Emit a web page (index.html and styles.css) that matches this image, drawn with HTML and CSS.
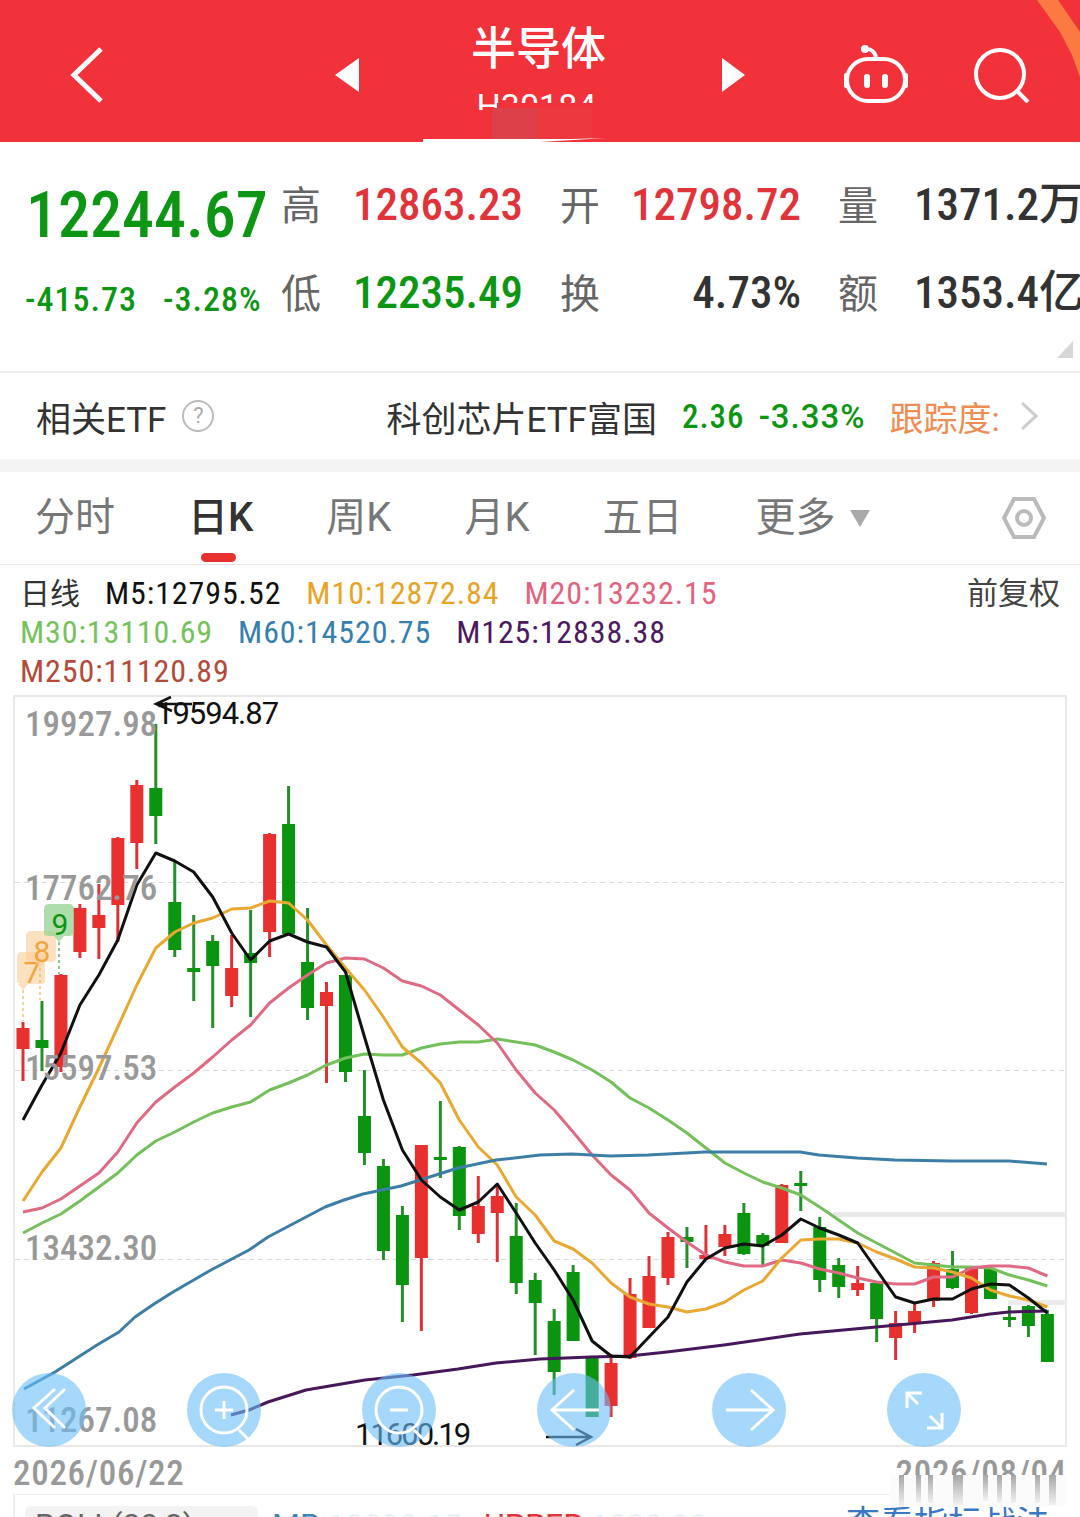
FILE: index.html
```html
<!DOCTYPE html>
<html>
<head>
    <meta charset="utf-8">
    <title>半导体</title>
    <link rel="stylesheet" href="styles.css">
</head>
<body>
    <div class="page">
        <div class="header">
            <svg class="back-icon" viewBox="0 0 34 58">
                <polyline points="31,3 4,29 31,55"></polyline>
            </svg>
            <svg class="arrow-icon prev" viewBox="0 0 24 34"><polygon points="24,0 24,34 0,17"></polygon></svg>
            <div class="title-box">
                <div class="title">半导体</div>
                <div class="subtitle">H30184</div>
            </div>
            <svg class="arrow-icon" viewBox="0 0 24 34"><polygon points="0,0 0,34 23,17"></polygon></svg>
            <svg class="robot-icon" viewBox="0 0 64 60">
                <rect x="3" y="14" width="58" height="42" rx="21"></rect>
                <path d="M32 14c0-5-2-8-7-10"></path>
                <circle class="solid" cx="21" cy="4" r="4"></circle>
                <rect class="solid" x="20" y="29" width="6" height="14" rx="3"></rect>
                <rect class="solid" x="38" y="29" width="6" height="14" rx="3"></rect>
                <rect class="solid" x="0" y="28" width="4" height="15" rx="2"></rect>
                <rect class="solid" x="60" y="28" width="4" height="15" rx="2"></rect>
            </svg>
            <svg class="search-icon" viewBox="0 0 56 56">
                <circle cx="26" cy="27" r="24"></circle>
                <line x1="44" y1="45" x2="54" y2="55"></line>
            </svg>
            <svg class="header-deco" viewBox="0 0 1080 142">
                <rect x="497" y="103" width="110" height="7" fill="#f1323a"></rect>
                <rect x="492" y="108" width="46" height="32" fill="#dc414a"></rect>
                <rect x="538" y="108" width="54" height="32" fill="#ee3840"></rect>
                <polygon points="423,139 572,139 606,138 540,142 423,142" fill="#fff"></polygon>
                <polygon points="1037,0 1058,0 1080,32 1080,77 1072,55 1060,32" fill="#fb7a42"></polygon>
            </svg>
        </div>

        <div class="stats">
            <div class="price green">12244.67</div>
            <div class="label">高</div>
            <div class="value red">12863.23</div>
            <div class="label">开</div>
            <div class="value red">12798.72</div>
            <div class="label">量</div>
            <div class="value dark wide">1371.2万</div>

            <div class="change green"><span>-415.73</span><span>-3.28%</span></div>
            <div class="label">低</div>
            <div class="value green">12235.49</div>
            <div class="label">换</div>
            <div class="value dark">4.73%</div>
            <div class="label">额</div>
            <div class="value dark wide">1353.4亿</div>
            <div class="corner"></div>
        </div>

        <div class="etf">
            <span class="etf-title">相关ETF</span>
            <span class="help">?</span>
            <span class="etf-name">科创芯片ETF富国</span>
            <span class="etf-num green">2.36</span>
            <span class="etf-num etf-pct green">-3.33%</span>
            <span class="etf-track">跟踪度:</span>
            <svg class="etf-more" viewBox="0 0 18 30"><polyline points="2,2 16,15 2,28"></polyline></svg>
        </div>

        <div class="band"></div>

        <div class="tabs">
            <div class="tab">分时</div>
            <div class="tab active">日K</div>
            <div class="tab">周K</div>
            <div class="tab">月K</div>
            <div class="tab">五日</div>
            <div class="tab more">更多</div>
            <div class="more-arrow"></div>
            <svg class="gear" viewBox="0 0 44 44">
                <polygon points="12,3 32,3 42,22 32,41 12,41 2,22"></polygon>
                <circle cx="22" cy="22" r="7"></circle>
            </svg>
        </div>

        <div class="legend">
            <div class="legend-row">
                <span class="legend-name">日线</span>
                <span class="m5">M5:12795.52</span>
                <span class="m10">M10:12872.84</span>
                <span class="m20">M20:13232.15</span>
                <span class="legend-fq">前复权</span>
            </div>
            <div class="legend-row">
                <span class="m30">M30:13110.69</span>
                <span class="m60">M60:14520.75</span>
                <span class="m125">M125:12838.38</span>
            </div>
            <div class="legend-row">
                <span class="m250">M250:11120.89</span>
            </div>
        </div>

        <div class="chart" id="chart">
            <div class="ylabel y1">19927.98</div>
            <div class="ylabel y2">17762.76</div>
            <div class="ylabel y3">15597.53</div>
            <div class="ylabel y4">13432.30</div>
            <div class="ylabel y5">11267.08</div>
            <div class="extreme hi">19594.87</div>
            <div class="extreme lo">11600.19</div>

            <div class="fabs">
                <svg class="fab" viewBox="0 0 74 74">
                    <polyline points="43,16 22,35 43,55"></polyline>
                    <polyline points="53,16 33,35 53,55"></polyline>
                </svg>
                <svg class="fab" viewBox="0 0 74 74">
                    <circle cx="37" cy="37" r="23"></circle>
                    <line x1="52" y1="57" x2="61" y2="66"></line>
                    <line x1="28" y1="37" x2="46" y2="37"></line>
                    <line x1="37" y1="28" x2="37" y2="46"></line>
                </svg>
                <svg class="fab" viewBox="0 0 74 74">
                    <circle cx="37" cy="37" r="23"></circle>
                    <line x1="52" y1="57" x2="61" y2="66"></line>
                    <line x1="28" y1="37" x2="46" y2="37"></line>
                </svg>
                <svg class="fab" viewBox="0 0 74 74">
                    <line x1="15" y1="37" x2="62" y2="37"></line>
                    <polyline points="37,17 15,37 37,57"></polyline>
                </svg>
                <svg class="fab" viewBox="0 0 74 74">
                    <line x1="14" y1="37" x2="61" y2="37"></line>
                    <polyline points="39,17 61,37 39,57"></polyline>
                </svg>
                <svg class="fab" viewBox="0 0 74 74">
                    <polyline points="20,35 20,20 35,20"></polyline>
                    <line x1="20" y1="20" x2="31" y2="31"></line>
                    <polyline points="55,40 55,55 40,55"></polyline>
                    <line x1="55" y1="55" x2="43" y2="43"></line>
                </svg>
            </div>
        </div>

        <div class="dates">
            <span>2026/06/22</span>
            <span class="date-end">2026/08/04
                <svg class="date-smudge" viewBox="0 0 176 32">
                    <defs>
                        <linearGradient id="smear" x1="0" y1="0" x2="0" y2="1">
                            <stop offset="0" stop-color="#a6a6a6"></stop>
                            <stop offset="1" stop-color="#f2f2f2"></stop>
                        </linearGradient>
                    </defs>
                    <rect x="9" y="0" width="5" height="32" fill="url(#smear)"></rect>
                    <rect x="26" y="0" width="5" height="28" fill="url(#smear)"></rect>
                    <rect x="38" y="0" width="5" height="28" fill="url(#smear)"></rect>
                    <rect x="63" y="0" width="10" height="30" fill="url(#smear)"></rect>
                    <rect x="93" y="0" width="5" height="26" fill="url(#smear)"></rect>
                    <rect x="107" y="0" width="5" height="28" fill="url(#smear)"></rect>
                    <rect x="121" y="0" width="5" height="28" fill="url(#smear)"></rect>
                    <rect x="145" y="0" width="5" height="28" fill="url(#smear)"></rect>
                    <rect x="159" y="0" width="7" height="30" fill="url(#smear)"></rect>
                </svg>
            </span>
        </div>

        <div class="indicator">
            <div class="indicator-pill">BOLL(20,2)</div>
            <span class="ind-mb">MB:<span class="ind-faint">13232.15</span></span>
            <span class="ind-up">UPPER:<span class="ind-faint">1033.83</span></span>
            <span class="ind-link">查看指标战法</span>
        </div>
    </div>

    <script src="chart.js"></script>
</body>
</html>
```

FILE: styles.css
```css
html, body {
    margin: 0;
    padding: 0;
    background: #fff;
}

.page {
    width: 1080px;
    height: 1517px;
    overflow: hidden;
    font-family: Roboto, "Noto Sans CJK SC", sans-serif;
}

.green {
    color: #0c9613;
}

.red {
    color: #e0333a;
}

.dark {
    color: #333;
}

/* top bar */
.header {
    position: relative;
    display: flex;
    align-items: center;
    height: 142px;
    padding-left: 70px;
    box-sizing: border-box;
    background: #f1323a;
}

.header-deco {
    position: absolute;
    left: 0;
    top: 0;
    width: 1080px;
    height: 142px;
}

.back-icon {
    width: 34px;
    height: 58px;
    margin-top: 8px;
    fill: none;
    stroke: #fff;
    stroke-width: 5;
}

.arrow-icon {
    width: 24px;
    height: 34px;
    margin-top: 8px;
    fill: #fff;
}

.arrow-icon.prev {
    margin-left: 231px;
}

.title-box {
    align-self: flex-start;
    width: 363px;
    height: 110px;
    padding-top: 24px;
    box-sizing: border-box;
    overflow: hidden;
    text-align: center;
    color: #fff;
}

.title {
    padding-right: 4px;
    font-size: 45px;
    font-weight: 500;
    line-height: 52px;
}

.subtitle {
    margin-top: 13px;
    padding-right: 8px;
    font-size: 34px;
    line-height: 34px;
}

.robot-icon {
    width: 64px;
    height: 60px;
    margin-left: 98px;
    margin-top: 8px;
    fill: none;
    stroke: #fff;
    stroke-width: 4;
}

.robot-icon .solid {
    fill: #fff;
    stroke: none;
}

.search-icon {
    width: 56px;
    height: 56px;
    margin-left: 66px;
    margin-top: 8px;
    fill: none;
    stroke: #fff;
    stroke-width: 4;
}

/* quote numbers */
.stats {
    position: relative;
    display: grid;
    grid-template-columns: 255px 40px 202px 77px 201px 77px 202px;
    grid-template-rows: 88px 88px;
    align-items: center;
    height: 231px;
    padding: 19px 0 0 26px;
    box-sizing: border-box;
    border-bottom: 2px solid #eee;
    font-stretch: 85%;
}

.price {
    margin-top: 22px;
    font-size: 64px;
    font-weight: 500;
    line-height: 72px;
    white-space: nowrap;
}

.change {
    display: flex;
    gap: 26px;
    margin: 12px 0 0 -1px;
    font-size: 34px;
    font-weight: 500;
    letter-spacing: 1px;
    white-space: nowrap;
}

.label {
    justify-self: end;
    margin-bottom: 5px;
    font-family: "Noto Sans CJK SC", sans-serif;
    font-size: 40px;
    line-height: 48px;
    color: #666;
}

.value {
    font-size: 45px;
    font-weight: 500;
    font-stretch: 83%;
    line-height: 50px;
    text-align: right;
    white-space: nowrap;
}

.value.wide {
    padding-left: 36px;
    text-align: left;
}

.corner {
    position: absolute;
    right: 7px;
    bottom: 13px;
    width: 0;
    height: 0;
    border-left: 16px solid transparent;
    border-bottom: 17px solid #d6d6d6;
}

/* related etf */
.etf {
    display: flex;
    align-items: center;
    height: 86px;
    padding-left: 36px;
    box-sizing: border-box;
    font-size: 35px;
    color: #333;
}

.help {
    width: 28px;
    height: 28px;
    margin-left: 16px;
    border: 2px solid #bbb;
    border-radius: 50%;
    font-size: 22px;
    line-height: 28px;
    text-align: center;
    color: #aaa;
}

.etf-name {
    margin-left: 172px;
}

.etf-num {
    margin-left: 25px;
    font-size: 33px;
    font-weight: 500;
    font-stretch: 85%;
    letter-spacing: 1px;
}

.etf-pct {
    margin-left: 14px;
    font-stretch: 95%;
}

.etf-track {
    margin-left: 24px;
    font-size: 34px;
    color: #ee8c55;
}

.etf-more {
    width: 18px;
    height: 30px;
    margin-left: 20px;
    fill: none;
    stroke: #ccc;
    stroke-width: 3;
}

.band {
    height: 13px;
    background: #f4f4f4;
}

/* period tabs */
.tabs {
    display: flex;
    align-items: center;
    gap: 73px;
    height: 93px;
    padding-left: 35px;
    box-sizing: border-box;
    border-bottom: 1px solid #e6e6e6;
}

.tab {
    position: relative;
    font-size: 40px;
    line-height: 48px;
    color: #777;
}

.tab.active {
    font-weight: 500;
    color: #333;
}

.tab.active::after {
    content: "";
    position: absolute;
    left: 13px;
    top: 59px;
    width: 35px;
    height: 9px;
    border-radius: 5px;
    background: #e8302f;
}

.more-arrow {
    width: 0;
    height: 0;
    margin-left: -59px;
    border-left: 10px solid transparent;
    border-right: 10px solid transparent;
    border-top: 17px solid #aaa;
}

.gear {
    width: 44px;
    height: 44px;
    margin-left: 59px;
    fill: none;
    stroke: #bbb;
    stroke-width: 4;
}

/* moving average legend */
.legend {
    height: 130px;
    padding: 9px 20px 0;
    box-sizing: border-box;
    font-size: 32px;
    font-weight: 450;
    font-stretch: 85%;
    letter-spacing: 0.9px;
}

.legend-row {
    display: flex;
    gap: 25px;
    height: 39px;
    line-height: 39px;
    white-space: nowrap;
}

.legend-name {
    font-size: 30px;
    font-weight: 400;
    letter-spacing: 0;
    color: #333;
}

.legend-fq {
    margin-left: auto;
    font-size: 31px;
    font-weight: 400;
    letter-spacing: 0;
    color: #444;
}

.m5 {
    color: #111;
}

.m10 {
    color: #e8a426;
}

.m20 {
    color: #e2637f;
}

.m30 {
    color: #74c35c;
}

.m60 {
    color: #3680ae;
}

.m125 {
    color: #4c1a60;
}

.m250 {
    color: #b54a39;
}

/* candle chart */
.chart {
    position: relative;
    width: 1054px;
    height: 752px;
    margin-left: 13px;
    box-sizing: border-box;
    border: 2px solid #e8e8e8;
}

.chart-svg {
    position: absolute;
    left: -2px;
    top: -2px;
    width: 1054px;
    height: 752px;
}

.ylabel {
    position: absolute;
    left: 10px;
    font-size: 35px;
    font-weight: 500;
    font-stretch: 84%;
    line-height: 36px;
    color: #999;
}

.y1 {
    top: 10px;
}

.y2 {
    top: 174px;
}

.y3 {
    top: 354px;
}

.y4 {
    top: 534px;
}

.y5 {
    top: 706px;
}

.extreme {
    position: absolute;
    font-size: 31px;
    letter-spacing: -1px;
    line-height: 34px;
    color: #111;
}

.extreme.hi {
    left: 141px;
    top: 0;
}

.extreme.lo {
    left: 340px;
    top: 721px;
    letter-spacing: -2px;
}

.fabs {
    position: absolute;
    left: -3px;
    top: 676px;
    display: flex;
    gap: 101px;
}

.fab {
    width: 74px;
    height: 74px;
    border-radius: 50%;
    background: rgba(107, 190, 248, 0.6);
    fill: none;
    stroke: #fff;
    stroke-width: 3;
}

.dates {
    display: flex;
    justify-content: space-between;
    height: 47px;
    margin: 0 13px;
    font-size: 35px;
    font-weight: 500;
    font-stretch: 85%;
    letter-spacing: 0.7px;
    line-height: 54px;
    color: #999;
}

.date-end {
    position: relative;
}

.date-smudge {
    position: absolute;
    left: -6px;
    top: 28px;
    width: 176px;
    height: 32px;
    background: #fbfbfb;
}

/* indicator line, cut off by the picture edge */
.indicator {
    display: flex;
    align-items: flex-start;
    height: 40px;
    margin: 0 13px;
    padding: 11px 0 0 10px;
    border-top: 1px solid #eee;
    border-left: 2px solid #eee;
    font-size: 32px;
    line-height: 38px;
    white-space: nowrap;
}

.indicator-pill {
    width: 233px;
    height: 40px;
    padding-left: 10px;
    box-sizing: border-box;
    border-radius: 6px;
    background: #f3f3f3;
    color: #666;
}

.ind-mb {
    margin-left: 14px;
    color: #3b86b8;
}

.ind-faint {
    color: #eaf2f5;
}

.ind-up {
    margin-left: 22px;
    color: #e0333a;
}

.ind-link {
    margin-left: auto;
    margin-right: 17px;
    font-size: 34px;
    line-height: 34px;
    color: #3b78c4;
}
```

FILE: chart.js
```js
// x position of candle i, in page pixels
function candleX(i) {
    return 23 + 18.97 * i;
}

// color, wick top, body top, body bottom, wick bottom
var candles = [
    ['r', 1022, 1028, 1049, 1081], ['g', 1001, 1040, 1048, 1071], ['r', 974, 975, 1067, 1072],
    ['r', 904, 908, 952, 958], ['r', 884, 915, 928, 959], ['r', 837, 838, 905, 942],
    ['r', 780, 785, 843, 869], ['g', 724, 788, 816, 844], ['g', 862, 902, 950, 957],
    ['g', 915, 968, 972, 1001], ['g', 935, 941, 966, 1028], ['r', 935, 968, 996, 1007],
    ['g', 910, 953, 963, 1017], ['r', 833, 834, 932, 957], ['g', 786, 824, 934, 935],
    ['g', 908, 962, 1008, 1020], ['r', 982, 992, 1006, 1083], ['g', 975, 975, 1072, 1082],
    ['g', 1070, 1116, 1153, 1165], ['g', 1159, 1166, 1251, 1260], ['g', 1206, 1215, 1285, 1322],
    ['r', 1145, 1145, 1258, 1331], ['g', 1101, 1157, 1160, 1178], ['g', 1146, 1147, 1216, 1230],
    ['r', 1176, 1206, 1234, 1243], ['r', 1185, 1196, 1213, 1262], ['g', 1203, 1236, 1283, 1294],
    ['g', 1273, 1280, 1303, 1355], ['g', 1309, 1321, 1372, 1395], ['g', 1265, 1272, 1341, 1341],
    ['g', 1357, 1357, 1417, 1417], ['r', 1354, 1363, 1406, 1417], ['r', 1278, 1294, 1358, 1359],
    ['r', 1256, 1276, 1328, 1328], ['r', 1232, 1237, 1278, 1285], ['g', 1227, 1237, 1242, 1268],
    ['r', 1225, 1255, 1259, 1260], ['r', 1225, 1234, 1247, 1256], ['g', 1203, 1213, 1254, 1255],
    ['g', 1233, 1235, 1246, 1265], ['r', 1184, 1185, 1243, 1243], ['g', 1171, 1183, 1186, 1211],
    ['g', 1217, 1227, 1280, 1292], ['g', 1258, 1265, 1287, 1298], ['r', 1266, 1283, 1290, 1296],
    ['g', 1283, 1283, 1319, 1342], ['r', 1311, 1323, 1338, 1360], ['r', 1302, 1311, 1324, 1333],
    ['r', 1261, 1263, 1301, 1307], ['g', 1251, 1269, 1288, 1289], ['r', 1266, 1267, 1313, 1314],
    ['g', 1267, 1269, 1299, 1299], ['g', 1306, 1317, 1318, 1327], ['g', 1305, 1306, 1326, 1337],
    ['g', 1310, 1314, 1362, 1362]
];

// one y per candle
var m5 = [1120, 1085, 1053, 1005, 975, 940, 885, 853, 861, 872, 897, 933, 960, 941, 934, 942, 947, 972, 1037,
    1100, 1150, 1180, 1197, 1210, 1202, 1184, 1213, 1243, 1270, 1300, 1341, 1356, 1357, 1337, 1317, 1282, 1259,
    1248, 1244, 1246, 1235, 1219, 1228, 1235, 1243, 1270, 1297, 1303, 1299, 1299, 1289, 1284, 1285, 1298, 1313];
var m10 = [1201, 1172, 1148, 1107, 1068, 1027, 985, 948, 932, 923, 918, 909, 908, 901, 903, 920, 945, 968, 990,
    1017, 1047, 1063, 1083, 1120, 1147, 1165, 1197, 1215, 1241, 1249, 1263, 1283, 1297, 1304, 1307, 1312, 1309,
    1302, 1290, 1281, 1258, 1240, 1239, 1239, 1243, 1252, 1259, 1267, 1268, 1272, 1278, 1290, 1296, 1300, 1307];
var m20 = [1212, 1208, 1199, 1186, 1173, 1152, 1123, 1102, 1087, 1073, 1057, 1040, 1025, 1003, 988, 975, 963, 958,
    959, 968, 981, 986, 995, 1010, 1025, 1043, 1070, 1093, 1110, 1132, 1155, 1175, 1190, 1213, 1228, 1242, 1255,
    1262, 1266, 1266, 1260, 1263, 1269, 1273, 1278, 1282, 1284, 1284, 1277, 1277, 1268, 1266, 1266, 1268, 1276];
var m30 = [1233, 1223, 1214, 1201, 1187, 1173, 1155, 1141, 1132, 1122, 1113, 1107, 1102, 1090, 1083, 1075, 1065,
    1058, 1054, 1055, 1055, 1048, 1044, 1042, 1042, 1039, 1042, 1045, 1052, 1060, 1070, 1082, 1098, 1108, 1120,
    1133, 1148, 1163, 1173, 1182, 1188, 1195, 1207, 1220, 1233, 1243, 1253, 1263, 1265, 1267, 1267, 1268, 1275,
    1280, 1286];

// these two are smooth, so a few [x, y] points are enough
var m60 = [[24, 1389], [55, 1372], [97, 1345], [119, 1332], [135, 1317], [154, 1304], [173, 1292], [211, 1270],
    [249, 1250], [268, 1237], [287, 1227], [325, 1207], [344, 1200], [363, 1194], [401, 1186], [420, 1180],
    [458, 1168], [496, 1160], [540, 1155], [572, 1154], [610, 1156], [648, 1155], [705, 1152], [743, 1152],
    [800, 1152], [819, 1155], [857, 1158], [895, 1160], [952, 1161], [1009, 1161], [1047, 1164]];
var m125 = [[231, 1415], [249, 1410], [268, 1402], [306, 1390], [365, 1380], [413, 1375], [458, 1369], [496, 1363],
    [540, 1359], [591, 1357], [629, 1356], [667, 1352], [724, 1345], [800, 1334], [876, 1327], [952, 1320],
    [971, 1317], [990, 1314], [1009, 1312], [1047, 1311]];

var svgNS = 'http://www.w3.org/2000/svg';
var chartSvg = document.createElementNS(svgNS, 'svg');
chartSvg.setAttribute('class', 'chart-svg');
chartSvg.setAttribute('viewBox', '13 695 1054 752');

function add(tag, attrs, text) {
    var el = document.createElementNS(svgNS, tag);
    for (var key in attrs) {
        el.setAttribute(key, attrs[key]);
    }
    if (text) {
        el.textContent = text;
    }
    chartSvg.appendChild(el);
    return el;
}

function drawLine(points, color) {
    add('polyline', {
        points: points.join(' '),
        fill: 'none',
        stroke: color,
        'stroke-width': 3,
        'stroke-linejoin': 'round'
    });
}

function byIndex(ys) {
    return ys.map(function (y, i) {
        return [candleX(i).toFixed(1), y];
    });
}

// dashed grid
[882.5, 1070.5, 1259.5].forEach(function (y) {
    add('line', { x1: 15, x2: 1065, y1: y, y2: y, stroke: '#d9d9d9', 'stroke-width': 1, 'stroke-dasharray': '5 4' });
});

// pale bars on the right side of the picture
add('rect', { x: 833, y: 1212, width: 234, height: 5, fill: '#e9e9e9' });
add('rect', { x: 1008, y: 1300, width: 59, height: 5, fill: '#ececec' });

candles.forEach(function (c, i) {
    var x = candleX(i);
    var color = c[0] === 'r' ? '#e8302f' : '#0a9410';
    var wick = c[0] === 'r' ? '#df3036' : '#25902b';
    add('line', { x1: x, x2: x, y1: c[1], y2: c[4], stroke: wick, 'stroke-width': 3 });
    add('rect', { x: x - 6.5, y: c[2], width: 13, height: Math.max(c[3] - c[2], 3), fill: color });
});

drawLine(byIndex(m30), '#74c05a');
drawLine(byIndex(m20), '#df6a84');
drawLine(byIndex(m10), '#e9a832');
drawLine(m125, '#46185a');
drawLine(m60, '#3d7ea6');
drawLine(byIndex(m5), '#111');

// high and low arrows
add('path', { d: 'M192 704H156M171 697L156 704L172 711', fill: 'none', stroke: '#111', 'stroke-width': 2.5 });
add('path', { d: 'M546 1437H591M576 1429L591 1437L576 1445', fill: 'none', stroke: '#111', 'stroke-width': 2.5 });

// 7 8 9 counters
function badge(x, y, w, h, bg, color, text, tipX, lineEnd) {
    add('line', { x1: tipX, x2: tipX, y1: y + h, y2: lineEnd, stroke: color, 'stroke-width': 1, 'stroke-dasharray': '3 3' });
    add('path', {
        d: 'M' + (x + 5) + ' ' + y + 'H' + (x + w - 5) + 'Q' + (x + w) + ' ' + y + ' ' + (x + w) + ' ' + (y + 5) +
            'V' + (y + h - 9) + 'Q' + (x + w) + ' ' + (y + h - 6) + ' ' + (x + w - 5) + ' ' + (y + h - 6) +
            'H' + (tipX + 5) + 'L' + tipX + ' ' + (y + h) + 'L' + (tipX - 5) + ' ' + (y + h - 6) +
            'H' + (x + 5) + 'Q' + x + ' ' + (y + h - 6) + ' ' + x + ' ' + (y + h - 9) +
            'V' + (y + 5) + 'Q' + x + ' ' + y + ' ' + (x + 5) + ' ' + y + 'Z',
        fill: bg
    });
    add('text', {
        x: x + w / 2 + 1,
        y: y + 31,
        fill: color,
        'font-size': 30,
        'font-family': 'Roboto, sans-serif',
        'text-anchor': 'middle'
    }, text);
}

badge(17, 952, 28, 38, 'rgba(250, 205, 150, 0.6)', '#efa53c', '7', 23, 1021);
badge(26, 931, 30, 37, 'rgba(250, 205, 150, 0.6)', '#efa53c', '8', 40, 1000);
badge(44, 904, 30, 38, 'rgba(150, 210, 145, 0.75)', '#0a9410', '9', 59, 974);

var chart = document.getElementById('chart');
chart.insertBefore(chartSvg, chart.firstChild);
```
